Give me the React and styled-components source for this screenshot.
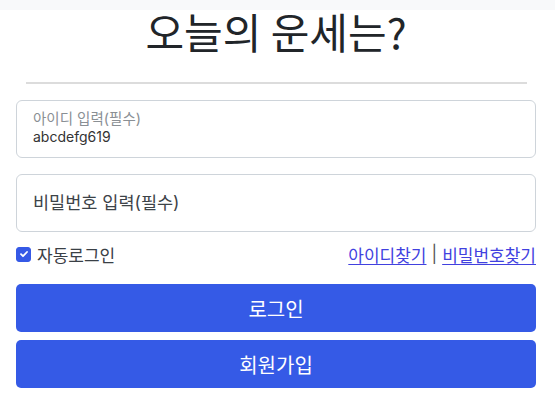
import React, { useState } from 'react';
import styled, { createGlobalStyle } from 'styled-components';

const GlobalStyle = createGlobalStyle`
	* { box-sizing: border-box; }
	body {
		margin: 0;
		background: #fff;
		font-family: Inter, "Noto Sans CJK KR", sans-serif;
		color: #212529;
	}
`;

const TopBar = styled.div`
	height: 10px;
	background-color: #f8f9fa;
`;

const Container = styled.div`
	width: 520px;
	margin-left: 16px;
`;

const Title = styled.h1`
	margin: -5px 0 0;
	text-align: center;
	font-family: "Noto Sans CJK KR", sans-serif;
	font-weight: 400;
	font-size: 42px;
	line-height: 52px;
	color: #212529;
`;

const Divider = styled.hr`
	width: 501px;
	margin: 25px 0 16px 10px;
	border: 0;
	border-top: 2px solid #dcdcdc;
	opacity: 1;
`;

const Field = styled.div`
	height: 58px;
	border: 1px solid #ced4da;
	border-radius: 6px;
	margin-bottom: 16px;
	background: #fff;
	display: flex;
	flex-direction: column;
	justify-content: center;
	padding: 0 16px;
`;

const FloatLabel = styled.label`
	font-size: 14.5px;
	line-height: 17px;
	color: #8a8f94;
	margin-top: -2px;
`;

const Value = styled.span`
	font-size: 14px;
	line-height: 20px;
	color: #333;
`;

const Placeholder = styled.span`
	font-size: 17.5px;
	line-height: 20px;
	color: #3d4348;
`;

const OptionRow = styled.div`
	display: flex;
	align-items: center;
	justify-content: space-between;
	height: 28px;
	margin: -8px 0 16px;
`;

const CheckLabel = styled.label`
	display: flex;
	align-items: center;
	gap: 6px;
	font-size: 17px;
	color: #3a4046;
	cursor: pointer;
`;

const CheckBox = styled.span`
	width: 15px;
	height: 15px;
	border-radius: 3px;
	background: ${p => (p.$checked ? '#3559e6' : '#fff')};
	border: 1px solid ${p => (p.$checked ? '#3559e6' : '#adb5bd')};
	display: flex;
	align-items: center;
	justify-content: center;
`;

const Links = styled.div`
	display: flex;
	align-items: center;
	gap: 5px;
	font-size: 17px;
`;

const Link = styled.a`
	color: #4141df;
	text-decoration: underline;
	text-underline-offset: 2px;
`;

const Sep = styled.span`
	color: #555;
`;

const Button = styled.button`
	display: block;
	width: 100%;
	height: 48px;
	margin-bottom: 8px;
	border: 0;
	border-radius: 5px;
	background-color: #355ae6;
	color: #fff;
	font-family: "Noto Sans CJK KR", sans-serif;
	font-size: 20px;
	cursor: pointer;
`;

export default function App() {
	const [auto, setAuto] = useState(true);
	return (
		<>
			<GlobalStyle />
			<TopBar />
			<Container>
				<Title>오늘의 운세는?</Title>
				<Divider />
				<Field>
					<FloatLabel>아이디 입력(필수)</FloatLabel>
					<Value>abcdefg619</Value>
				</Field>
				<Field>
					<Placeholder>비밀번호 입력(필수)</Placeholder>
				</Field>
				<OptionRow>
					<CheckLabel onClick={() => setAuto(!auto)}>
						<CheckBox $checked={auto}>
							{auto && (
								<svg width="10" height="10" viewBox="0 0 10 10">
									<path d="M2 5.2l2 2 4-4.2" fill="none" stroke="#fff" strokeWidth="1.8" strokeLinecap="round" strokeLinejoin="round" />
								</svg>
							)}
						</CheckBox>
						자동로그인
					</CheckLabel>
					<Links>
						<Link href="#">아이디찾기</Link>
						<Sep>|</Sep>
						<Link href="#">비밀번호찾기</Link>
					</Links>
				</OptionRow>
				<Button>로그인</Button>
				<Button>회원가입</Button>
			</Container>
		</>
	);
}
